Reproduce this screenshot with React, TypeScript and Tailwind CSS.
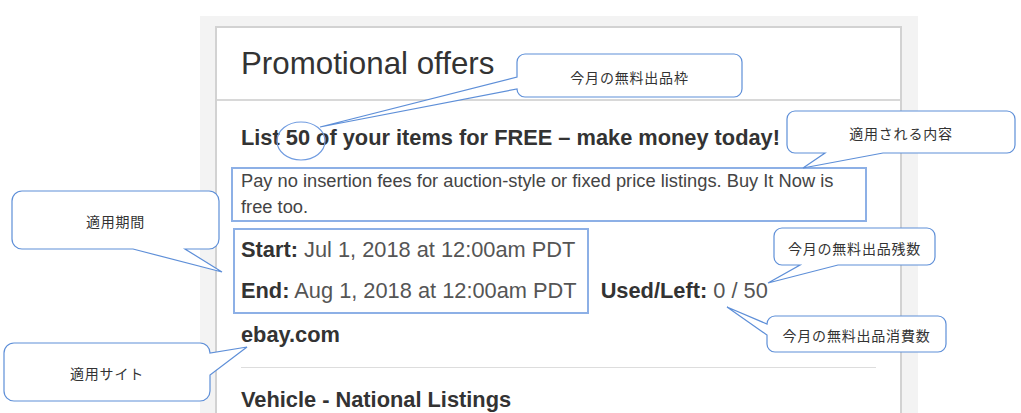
type Side = "top" | "right" | "bottom" | "left";

type Callout = {
  label: string;
  x: number;
  y: number;
  w: number;
  h: number;
  r: number;
  side: Side;
  a: number;
  b: number;
  tx: number;
  ty: number;
};

// annotation bubbles drawn over the screenshot
const callouts: Callout[] = [
  { label: "今月の無料出品枠", x: 517, y: 54, w: 225, h: 43, r: 8, side: "left", a: 77, b: 89, tx: 320, ty: 127 },
  { label: "適用される内容", x: 787, y: 111, w: 228, h: 42, r: 8, side: "bottom", a: 825, b: 883, tx: 803, ty: 168 },
  { label: "適用期間", x: 12, y: 191, w: 207, h: 58, r: 10, side: "bottom", a: 133, b: 185, tx: 222, ty: 272 },
  { label: "今月の無料出品残数", x: 774, y: 228, w: 161, h: 37, r: 8, side: "bottom", a: 800, b: 838, tx: 768, ty: 283 },
  { label: "今月の無料出品消費数", x: 767, y: 316, w: 179, h: 36, r: 8, side: "left", a: 324, b: 335, tx: 727, ty: 307 },
  { label: "適用サイト", x: 4, y: 343, w: 206, h: 58, r: 10, side: "right", a: 353, b: 375, tx: 247, ty: 347 },
];

function calloutPath(c: Callout) {
  const { x, y, w, h, r, side, a, b, tx, ty } = c;
  const R = x + w;
  const B = y + h;
  let d = `M${x + r},${y}`;
  if (side === "top") d += ` L${a},${y} L${tx},${ty} L${b},${y}`;
  d += ` L${R - r},${y} A${r},${r} 0 0 1 ${R},${y + r}`;
  if (side === "right") d += ` L${R},${a} L${tx},${ty} L${R},${b}`;
  d += ` L${R},${B - r} A${r},${r} 0 0 1 ${R - r},${B}`;
  if (side === "bottom") d += ` L${b},${B} L${tx},${ty} L${a},${B}`;
  d += ` L${x + r},${B} A${r},${r} 0 0 1 ${x},${B - r}`;
  if (side === "left") d += ` L${x},${b} L${tx},${ty} L${x},${a}`;
  d += ` L${x},${y + r} A${r},${r} 0 0 1 ${x + r},${y} Z`;
  return d;
}

function Annotations() {
  return (
    <svg
      className="absolute left-0 top-0 pointer-events-none"
      width={1021}
      height={413}
      viewBox="0 0 1021 413"
    >
      <rect x={232} y={168} width={634} height={53} fill="none" stroke="#8db0e6" strokeWidth={2} />
      <rect x={234} y={229} width={354} height={84} fill="none" stroke="#8db0e6" strokeWidth={2} />
      <ellipse cx={301} cy={141} rx={24} ry={19} fill="none" stroke="#6f9be0" strokeWidth={1.2} />
      {callouts.map((c) => (
        <g key={c.label}>
          <path d={calloutPath(c)} fill="#ffffff" stroke="#5e8fd8" strokeWidth={1.2} />
          <text
            x={c.x + c.w / 2}
            y={c.y + c.h / 2 + 1}
            textAnchor="middle"
            dominantBaseline="central"
            className="font-['Noto_Sans_CJK_JP',sans-serif] text-[14px] tracking-[0.8px] fill-[#333333]"
          >
            {c.label}
          </text>
        </g>
      ))}
    </svg>
  );
}

export default function App() {
  return (
    <div className="relative w-[1021px] h-[413px] overflow-hidden bg-white font-['Liberation_Sans',Arial,sans-serif]">
      <div className="ml-[200px] mt-[16px] w-[718px] h-[397px] bg-[#f3f3f3] pt-[10px] pl-[15px] pr-[16px]">
        <div className="h-full bg-white border-2 border-b-0 border-[#d2d2d2]">
          <div className="h-[73px] border-b-2 border-[#d8d8d8] px-[24px] pt-[20px]">
            <h1 className="text-[31.3px] leading-[31px] text-[#333333]">Promotional offers</h1>
          </div>
          <div className="px-[24px]">
            <h2 className="mt-[23.5px] text-[21.8px] leading-[26px] font-bold text-[#333333]">
              List 50 of your items for FREE – make money today!
            </h2>
            <p className="mt-[17.5px] max-w-[612px] text-[18.3px] leading-[26px] text-[#444444]">
              Pay no insertion fees for auction-style or fixed price listings. Buy It Now is free too.
            </p>
            <div className="mt-[9px] text-[21.8px] leading-[41px] text-[#555555]">
              <div>
                <span className="font-bold text-[#333333]">Start:</span> Jul 1, 2018 at 12:00am PDT
              </div>
              <div>
                <span className="font-bold text-[#333333]">End:</span> Aug 1, 2018 at 12:00am PDT
                <span className="ml-[24px] font-bold text-[#333333]">Used/Left:</span> 0 / 50
              </div>
            </div>
            <div className="mt-[10.5px] text-[21.8px] leading-[26px] font-bold text-[#333333]">ebay.com</div>
            <hr className="mt-[19.5px] border-0 border-t border-[#dddddd]" />
            <h3 className="mt-[18.5px] text-[21.8px] leading-[26px] font-bold text-[#333333]">
              Vehicle - National Listings
            </h3>
          </div>
        </div>
      </div>
      <Annotations />
    </div>
  );
}
